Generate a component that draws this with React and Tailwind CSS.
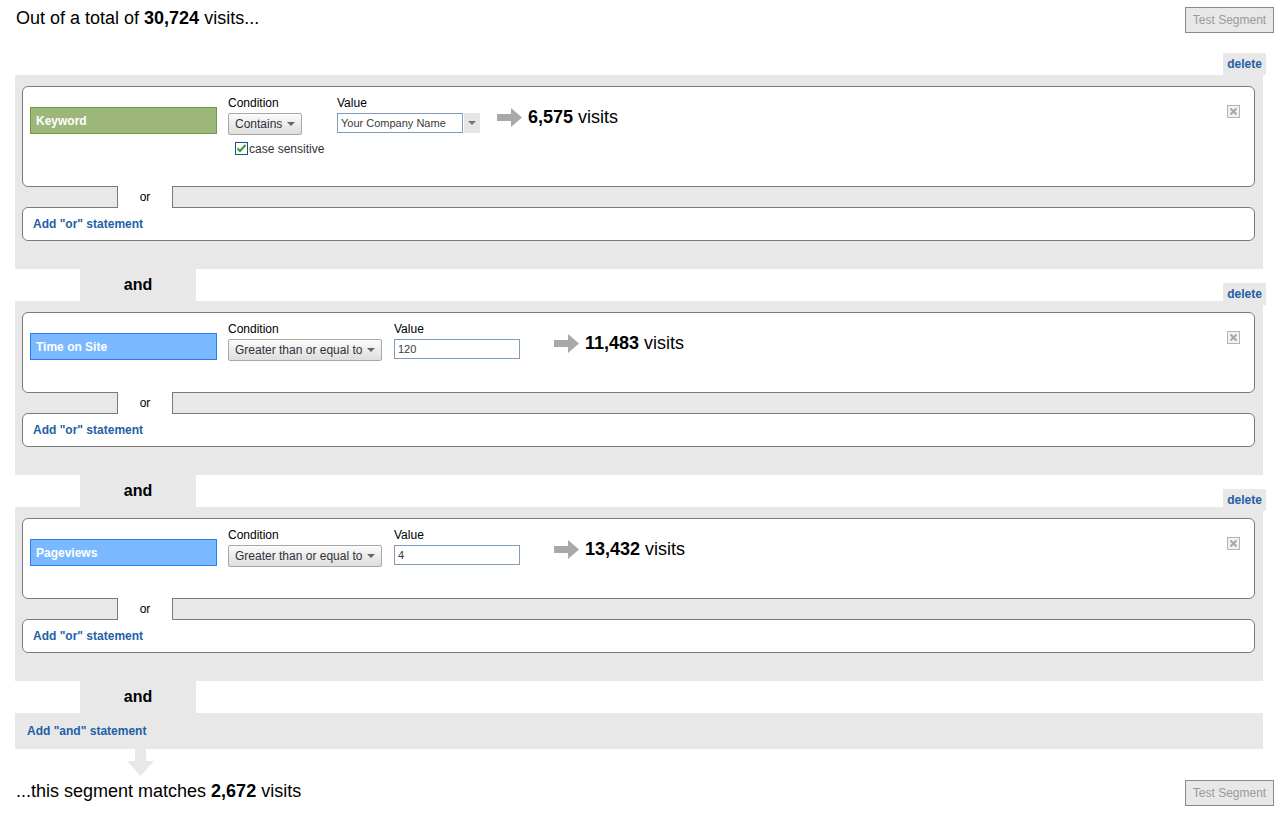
import React from "react";

const blocks = [
  {
    field: "Keyword",
    tone: "green",
    cond: "Contains",
    condW: "w-[109px]",
    value: "Your Company Name",
    valueW: "w-[126px]",
    drop: true,
    caseSensitive: true,
    count: "6,575",
  },
  {
    field: "Time on Site",
    tone: "blue",
    cond: "Greater than or equal to",
    condW: "w-[166px]",
    value: "120",
    valueW: "w-[126px]",
    count: "11,483",
  },
  {
    field: "Pageviews",
    tone: "blue",
    cond: "Greater than or equal to",
    condW: "w-[166px]",
    value: "4",
    valueW: "w-[126px]",
    count: "13,432",
  },
];

function Caret() {
  return (
    <svg width="8" height="4" viewBox="0 0 8 4" className="ml-[5px]">
      <path d="M0 0h8L4 4z" fill="#666" />
    </svg>
  );
}

function TestButton() {
  return (
    <button className="h-[26px] w-[89px] border border-[#8a8a8a] bg-[#e8e8e8] text-[12px] text-[#9a9a9a]">
      Test Segment
    </button>
  );
}

function DeleteTab({ drop }) {
  return (
    <div
      className={`relative z-10 -mr-[3px] flex h-[22px] w-[43px] items-center justify-center bg-[#e8e8e8] text-[12px] font-bold text-[#1f5fa6] ${
        drop ? "-mb-[4px]" : ""
      }`}
    >
      delete
    </div>
  );
}

function CloseIcon() {
  return (
    <svg width="13" height="13" viewBox="0 0 13 13">
      <rect x="0.5" y="0.5" width="12" height="12" fill="#f2f2f2" stroke="#b4b4b4" />
      <path d="M3.5 3.5l6 6M9.5 3.5l-6 6" stroke="#a6a6a6" strokeWidth="2" />
    </svg>
  );
}

function GreyArrow() {
  return (
    <svg width="25" height="19" viewBox="0 0 25 19">
      <path d="M0 6h14V0l11 9.5L14 19v-6H0z" fill="#a8a8a8" />
    </svg>
  );
}

function Condition({ b }) {
  const fieldCls =
    b.tone === "green"
      ? "bg-[#9db77b] border-[#6f9c3d]"
      : "bg-[#7ab9ff] border-[#2a7df5]";
  return (
    <div className="relative rounded-[6px] border border-[#7a7a7a] bg-white pb-[31px] pl-[7px] pt-[9px]">
      <div className="flex items-start">
        <div
          className={`mt-[11px] flex h-[27px] w-[187px] items-center border px-[5px] text-[12px] font-bold text-white ${fieldCls}`}
        >
          {b.field}
        </div>
        <div className={`ml-[11px] ${b.condW}`}>
          <div className="h-[14px] text-[12px] leading-[14px] text-black">Condition</div>
          <button className="mt-[3px] flex h-[22px] items-center rounded-[2px] border border-[#a8a8a8] bg-gradient-to-b from-[#fbfbfb] to-[#dedede] pl-[6px] pr-[6px] text-[12px] text-[#33303a]">
            {b.cond}
            <Caret />
          </button>
          {b.caseSensitive && (
            <div className="ml-[7px] mt-[7px] flex h-[13px] items-center text-[12px] text-[#33303a]">
              <span className="flex h-[13px] w-[13px] items-center justify-center border border-[#1c5180] bg-white">
                <svg width="11" height="11" viewBox="0 0 11 11">
                  <path d="M1.5 5.5l2.5 2.5 5.5-6" fill="none" stroke="#2c9e2c" strokeWidth="2" />
                </svg>
              </span>
              <span className="ml-[1px]">case sensitive</span>
            </div>
          )}
        </div>
        <div className="w-[160px]">
          <div className="h-[14px] text-[12px] leading-[14px] text-black">Value</div>
          <div className="mt-[3px] flex">
            <div
              className={`flex h-[20px] items-center border border-[#7f9db9] bg-white pl-[3px] text-[11px] text-[#3a3a3a] ${b.valueW}`}
            >
              {b.value}
            </div>
            {b.drop && (
              <div className="ml-[1px] flex h-[20px] w-[16px] items-center justify-center bg-[#e6e6e6]">
                <svg width="8" height="4" viewBox="0 0 8 4">
                  <path d="M0 0h8L4 4z" fill="#777" />
                </svg>
              </div>
            )}
          </div>
        </div>
        <div className="mt-[11px] flex items-center">
          <GreyArrow />
          <span className="ml-[6px] text-[18px] leading-[20px] text-black">
            <b>{b.count}</b> visits
          </span>
        </div>
      </div>
      <div className="absolute right-[14px] top-[18px]">
        <CloseIcon />
      </div>
    </div>
  );
}

function Block({ b }) {
  return (
    <div className="bg-[#e8e8e8] pb-[28px] pl-[7px] pr-[8px] pt-[11px]">
      <Condition b={b} />
      <div className="relative z-10 -my-px ml-[95px] flex h-[22px] w-[56px] items-center justify-center border-x border-[#7a7a7a] bg-white text-[12px] text-black">
        or
      </div>
      <div className="flex h-[34px] items-center rounded-[6px] border border-[#7a7a7a] bg-white pl-[10px] text-[12px] font-bold text-[#1f5fa6]">
        Add "or" statement
      </div>
    </div>
  );
}

function AndRow({ withDelete }) {
  return (
    <div className="flex h-[32px] items-end justify-between">
      <div className="ml-[65px] flex h-[32px] w-[116px] items-center justify-center bg-[#e8e8e8] text-[16px] font-bold text-black">
        and
      </div>
      {withDelete && <DeleteTab drop />}
    </div>
  );
}

export default function App() {
  return (
    <div className="min-h-screen w-[1283px] bg-white font-['Liberation_Sans',Arial,sans-serif]">
      <div className="flex h-[53px] items-start justify-between pl-[16px] pr-[9px] pt-[7px]">
        <div className="text-[18px] leading-[22px] text-black">
          Out of a total of <b>30,724</b> visits...
        </div>
        <TestButton />
      </div>

      <div className="ml-[15px] w-[1248px]">
        <div className="flex justify-end">
          <DeleteTab />
        </div>
        <Block b={blocks[0]} />
        <AndRow withDelete />
        <Block b={blocks[1]} />
        <AndRow withDelete />
        <Block b={blocks[2]} />
        <AndRow />
        <div className="flex h-[36px] items-center bg-[#e8e8e8] pl-[12px] text-[12px] font-bold text-[#1f5fa6]">
          Add "and" statement
        </div>
        <svg width="27" height="27" viewBox="0 0 27 27" className="ml-[112px]">
          <path d="M8 0h11v12h8L13.5 27 0 12h8z" fill="#e8e8e8" />
        </svg>
      </div>

      <div className="flex items-start justify-between pl-[16px] pr-[9px] pt-[4px]">
        <div className="text-[18px] leading-[22px] text-black">
          ...this segment matches <b>2,672</b> visits
        </div>
        <TestButton />
      </div>
    </div>
  );
}
